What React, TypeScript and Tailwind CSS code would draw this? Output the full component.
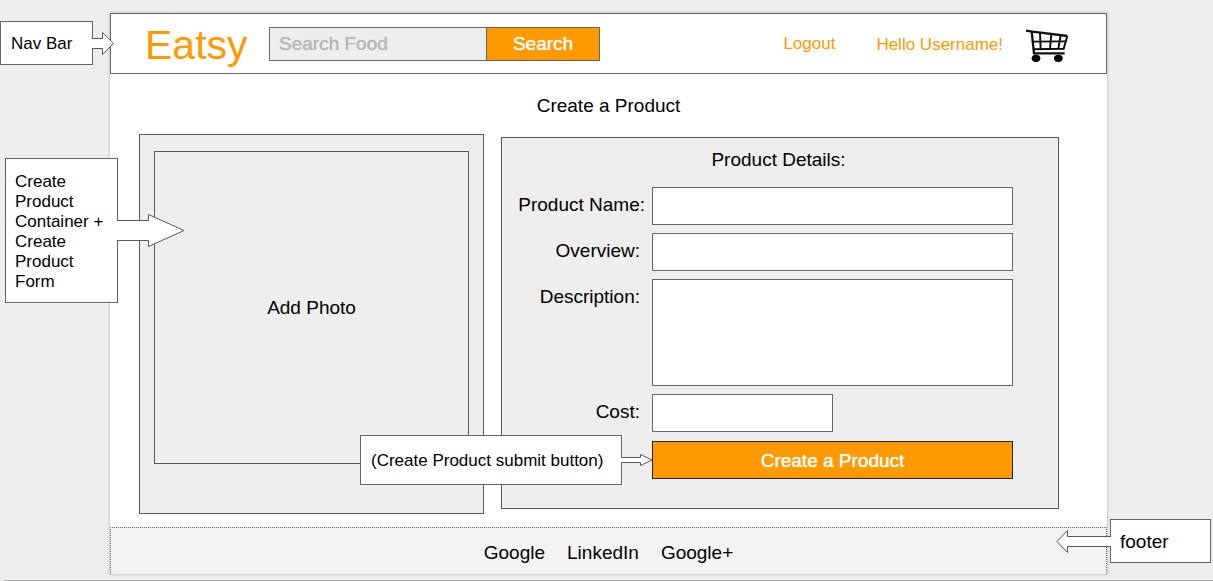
import type { ReactNode } from "react";

type CalloutProps = {
  children: ReactNode;
  className: string;
  boxClassName: string;
  arrow: string;
  arrowWidth: number;
  arrowHeight: number;
  pointsLeft?: boolean;
};

function Callout({
  children,
  className,
  boxClassName,
  arrow,
  arrowWidth,
  arrowHeight,
  pointsLeft = false,
}: CalloutProps) {
  return (
    <aside
      className={`absolute z-10 flex items-center ${pointsLeft ? "flex-row-reverse" : ""} ${className}`}
    >
      <p className={`flex items-center border border-[#666] bg-white pt-0.5 ${boxClassName}`}>{children}</p>
      <svg
        width={arrowWidth}
        height={arrowHeight}
        viewBox={`0 0 ${arrowWidth} ${arrowHeight}`}
        className={`relative shrink-0 ${pointsLeft ? "-mr-px" : "-ml-px"}`}
        aria-hidden="true"
      >
        <path d={arrow} fill="#fff" stroke="#595959" />
      </svg>
    </aside>
  );
}

function CartIcon() {
  return (
    <svg width="46" height="36" viewBox="0 0 138 108" fill="none" stroke="#111" aria-hidden="true">
      <path d="M6 8 L26 11 L130 24" strokeWidth="7" />
      <path d="M23 11 L30 76 H122" strokeWidth="7" />
      <path d="M130 24 L119 62 L28 64" strokeWidth="6" />
      <path d="M26 41 L124 40" strokeWidth="5" />
      <path d="M48 14 L50 64 M82 18 L78 63 M110 22 L103 62" strokeWidth="6" />
      <ellipse cx="36" cy="91" rx="13" ry="11" fill="#000" stroke="none" />
      <ellipse cx="103" cy="91" rx="13" ry="11" fill="#000" stroke="none" />
    </svg>
  );
}

const field = "block w-full rounded-none border border-[#666] bg-white px-2 outline-none";
const label = "pt-1.5 text-right leading-6 whitespace-nowrap";

function NavBar() {
  return (
    <nav className="flex h-[61px] items-center border border-[#666] bg-white pt-px pr-9 pl-[34px] text-[17px] text-[#ff9900]">
      <a href="#home" className="w-[103px] pt-0.5 text-[41px] leading-none">
        Eatsy
      </a>
      <form className="ml-[21px] flex h-[34px]" onSubmit={(e) => e.preventDefault()}>
        <input
          type="search"
          aria-label="Search Food"
          placeholder="Search Food"
          className="w-[218px] rounded-none border border-[#666] bg-[#eee] px-[9px] text-[19px] text-black outline-none placeholder:text-[#b7b7b7] placeholder:[text-shadow:0_0_1px_#b7b7b7]"
        />
        <button
          type="submit"
          className="-ml-px w-[114px] border border-[#666] bg-[#ff9900] text-[19px] text-white [text-shadow:0_0_1px_#fff]"
        >
          Search
        </button>
      </form>
      <div className="ml-auto flex items-center">
        <a href="#logout">Logout</a>
        <a href="#profile" className="ml-[41px] pt-0.5">
          Hello Username!
        </a>
        <a href="#cart" aria-label="Cart" className="ml-[21px] pt-1">
          <CartIcon />
        </a>
      </div>
    </nav>
  );
}

function ProductForm() {
  return (
    <form
      className="mt-[3px] border border-[#595959] bg-[#eee] pt-2.5 pr-[45px] pb-[29px] pl-[14px]"
      onSubmit={(e) => e.preventDefault()}
    >
      <h2 className="-mr-7 text-center leading-6">Product Details:</h2>
      <div className="mt-[15px] grid grid-cols-[129px_1fr] gap-x-[7px] gap-y-2">
        <label htmlFor="name" className={label}>
          Product Name:
        </label>
        <input id="name" type="text" className={`${field} h-[38px]`} />
        <label htmlFor="overview" className={`${label} pr-[5px]`}>
          Overview:
        </label>
        <input id="overview" type="text" className={`${field} h-[38px]`} />
        <label htmlFor="description" className={`${label} pr-[5px]`}>
          Description:
        </label>
        <textarea id="description" className={`${field} h-[107px] resize-none`} />
        <label htmlFor="cost" className={`${label} pr-[5px]`}>
          Cost:
        </label>
        <div className="w-1/2">
          <input id="cost" type="text" className={`${field} h-[38px]`} />
        </div>
        <div className="relative col-start-2 mt-px">
          <button
            type="submit"
            className="block h-[38px] w-full border border-[#222] bg-[#ff9900] pt-0.5 text-white [text-shadow:0_0_1px_#fff]"
          >
            Create a Product
          </button>
          <Callout
            className="-top-1.5 right-full -mr-px"
            boxClassName="h-[50px] w-[262px] pl-[10px] text-[17px] whitespace-nowrap"
            arrow="M0 3.5 H19.5 V0.5 L31 6 L19.5 11.5 V8.5 H0"
            arrowWidth={32}
            arrowHeight={12}
          >
            (Create Product submit button)
          </Callout>
        </div>
      </div>
    </form>
  );
}

export default function App() {
  return (
    <div className="overflow-x-hidden bg-[#eee] pt-[13px] font-['Liberation_Sans',Arial,sans-serif] text-[19px] text-black">
      <div className="relative mr-[106px] ml-[110px] bg-white shadow-[0_0_3px_#aaa]">
        <NavBar />
        <Callout
          className="top-2 -left-[110px]"
          boxClassName="h-11 w-[93px] pl-[10px] text-[17px]"
          arrow="M0 6.5 H10.5 V0.5 L21.5 11.5 L10.5 22.5 V16.5 H0"
          arrowWidth={23}
          arrowHeight={23}
        >
          Nav Bar
        </Callout>
        <Callout
          className="top-[145px] -left-[105px]"
          boxClassName="h-[145px] w-[113px] px-[9px] text-[17px] leading-5"
          arrow="M0 6.5 H31.5 V0.5 L67 16.5 L31.5 32.5 V26.5 H0"
          arrowWidth={68}
          arrowHeight={33}
        >
          Create Product Container + Create Product Form
        </Callout>

        <main className="pt-5 pr-12 pb-[13px] pl-[29px]">
          <h1 className="-mr-[19px] text-center leading-6">Create a Product</h1>
          <div className="mt-4 grid grid-cols-[345fr_558fr] items-start gap-[17px]">
            <section className="border border-[#595959] bg-[#eee] px-[14px] pt-4 pb-[49px]">
              <button type="button" className="block h-[313px] w-full border border-[#595959] pt-0.5">
                Add Photo
              </button>
            </section>
            <ProductForm />
          </div>
        </main>

        <footer className="relative flex h-[47px] items-center justify-center gap-[22px] border border-b-0 border-dotted border-[#666] bg-[#f3f3f3] pt-1">
          <a href="#google">Google</a>
          <a href="#linkedin">LinkedIn</a>
          <a href="#google-plus">Google+</a>
          <Callout
            className="-top-[9px] -right-[105px]"
            boxClassName="h-11 w-[101px] pl-[9px]"
            arrow="M55 6.5 H11.5 V0.5 L1 11.5 L11.5 22.5 V16.5 H55"
            arrowWidth={55}
            arrowHeight={23}
            pointsLeft
          >
            footer
          </Callout>
        </footer>
      </div>
      <div className="mt-1.5 ml-1 h-px bg-[#aaa]" />
    </div>
  );
}
